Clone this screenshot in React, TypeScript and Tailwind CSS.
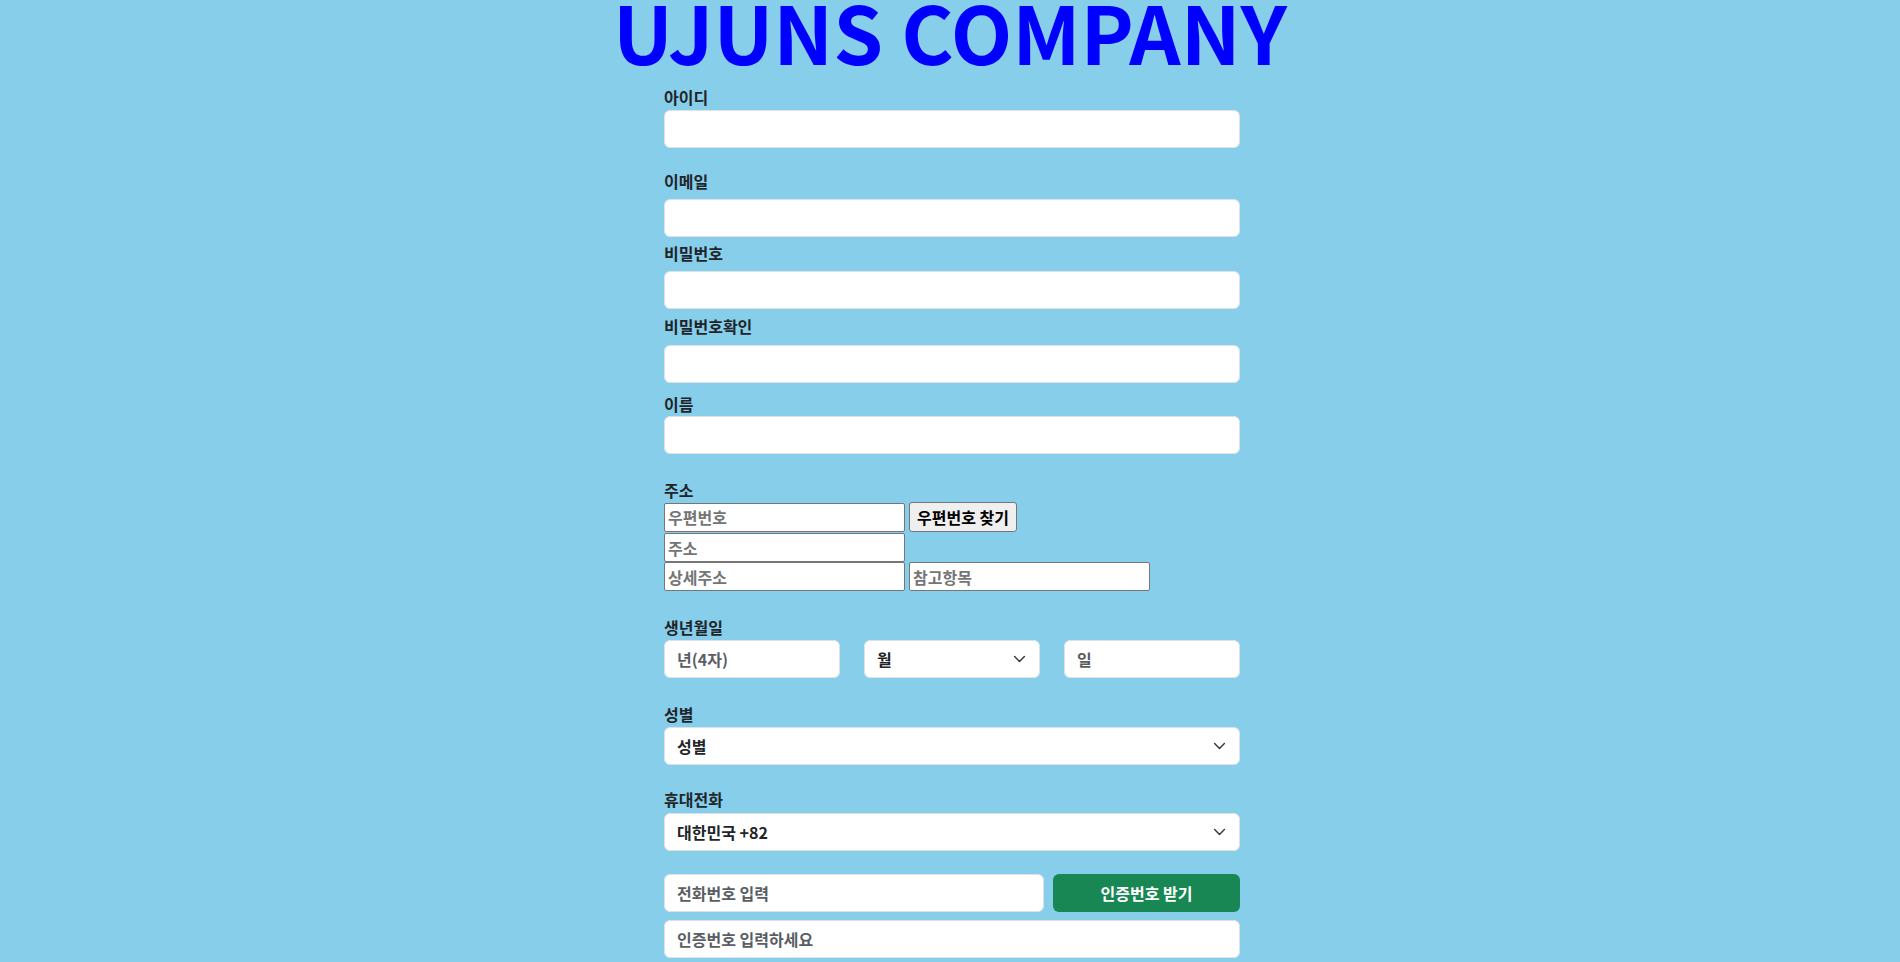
import { useState } from 'react';

const inputBase =
  'block h-[38px] rounded-[6px] border border-[#dee2e6] bg-white px-3 text-[16px] font-semibold text-[#212529] placeholder:text-[#5a5e62] outline-none';
const inputCls = `${inputBase} w-full`;
const plainCls =
  'h-[29px] w-[241px] rounded-[2px] border border-[#767676] bg-white px-[3px] text-[16px] font-semibold text-black placeholder:text-[#757575] outline-none';
const labelCls = 'block text-[16px] font-bold leading-[20px] text-[#212529]';

function Chevron() {
  return (
    <svg width="13" height="13" viewBox="0 0 16 16" className="pointer-events-none absolute right-[14px] top-1/2 -translate-y-1/2">
      <path d="m2 5 6 6 6-6" fill="none" stroke="#343a40" strokeWidth="1.8" strokeLinecap="round" strokeLinejoin="round" />
    </svg>
  );
}

function Select({ value, options, onChange }: { value: string; options: string[]; onChange: (v: string) => void }) {
  return (
    <div className="relative">
      <select
        value={value}
        onChange={(e) => onChange(e.target.value)}
        className="block w-full h-[38px] appearance-none rounded-[6px] border border-[#dee2e6] bg-white pl-3 pr-9 text-[16px] font-bold text-[#212529] outline-none"
      >
        {options.map((o) => (
          <option key={o} value={o}>{o}</option>
        ))}
      </select>
      <Chevron />
    </div>
  );
}

export default function App() {
  const [month, setMonth] = useState('월');
  const [gender, setGender] = useState('성별');
  const [country, setCountry] = useState('대한민국 +82');

  return (
    <div className="min-h-screen bg-[#87ceeb] font-['Noto_Sans_CJK_KR','Noto_Sans',sans-serif] text-[#212529]">
      <h1 className="text-center text-[80px] font-bold leading-[60px] text-[#0000ff]">UJUNS COMPANY</h1>

      <form className="mx-auto w-[580px] pl-[4px]" onSubmit={(e) => e.preventDefault()}>
        <label htmlFor="userId" className={`${labelCls} mt-[27px]`}>아이디</label>
        <input id="userId" className={`${inputCls} mt-[3px]`} />

        <label htmlFor="email" className={`${labelCls} mt-[23px]`}>이메일</label>
        <input id="email" className={`${inputCls} mt-[8px]`} />

        <label htmlFor="pw" className={`${labelCls} mt-[6px]`}>비밀번호</label>
        <input id="pw" type="password" className={`${inputCls} mt-[8px]`} />

        <label htmlFor="pw2" className={`${labelCls} mt-[7px]`}>비밀번호확인</label>
        <input id="pw2" type="password" className={`${inputCls} mt-[9px]`} />

        <label htmlFor="name" className={`${labelCls} mt-[11px]`}>이름</label>
        <input id="name" className={`${inputCls} mt-[2px]`} />

        <label className={`${labelCls} mt-[26px]`}>주소</label>
        <div className="mt-[2px] flex h-[30px] items-center gap-[4px]">
          <input placeholder="우편번호" className={plainCls} />
          <button
            type="button"
            className="h-[30px] rounded-[3px] border border-[#767676] bg-[#efefef] px-[7px] text-[16px] font-bold text-black"
          >
            우편번호 찾기
          </button>
        </div>
        <div className="mt-[1px] flex">
          <input placeholder="주소" className={plainCls} />
        </div>
        <div className="flex gap-[4px]">
          <input placeholder="상세주소" className={plainCls} />
          <input placeholder="참고항목" className={plainCls} />
        </div>

        <label className={`${labelCls} mt-[26px]`}>생년월일</label>
        <div className="mt-[3px] grid grid-cols-3 gap-6">
          <input placeholder="년(4자)" className={inputCls} />
          <Select value={month} onChange={setMonth} options={['월', '1', '2', '3', '4', '5', '6', '7', '8', '9', '10', '11', '12']} />
          <input placeholder="일" className={inputCls} />
        </div>

        <label className={`${labelCls} mt-[26px]`}>성별</label>
        <div className="mt-[3px]">
          <Select value={gender} onChange={setGender} options={['성별', '남자', '여자', '선택 안함']} />
        </div>

        <label className={`${labelCls} mt-[24px]`}>휴대전화</label>
        <div className="mt-[4px]">
          <Select value={country} onChange={setCountry} options={['대한민국 +82', '미국 +1', '일본 +81', '중국 +86']} />
        </div>

        <div className="mt-[23px] flex gap-[9px]">
          <input placeholder="전화번호 입력" className={`${inputBase} w-[380px] shrink-0`} />
          <button
            type="button"
            className="h-[38px] flex-1 rounded-[6px] bg-[#198754] text-[16px] font-bold text-white"
          >
            인증번호 받기
          </button>
        </div>
        <input placeholder="인증번호 입력하세요" className={`${inputCls} mt-[8px]`} />
      </form>
    </div>
  );
}
